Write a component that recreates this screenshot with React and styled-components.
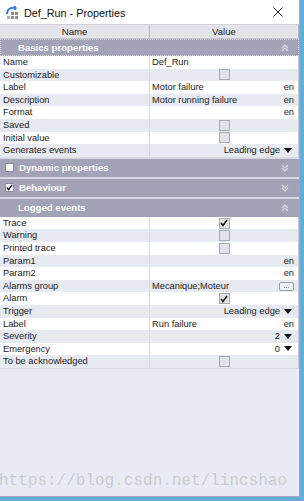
import React from "react";
import styled, { createGlobalStyle } from "styled-components";

const GlobalStyle = createGlobalStyle`
  html, body {
    margin: 0;
    padding: 0;
    background: #e8ebf3;
  }
  * {
    box-sizing: border-box;
  }
`;

const basics = [
  { name: "Name", type: "text", value: "Def_Run" },
  { name: "Customizable", type: "check" },
  { name: "Label", type: "text", value: "Motor failure", lang: "en" },
  { name: "Description", type: "text", value: "Motor running failure", lang: "en" },
  { name: "Format", type: "text", value: "", lang: "en" },
  { name: "Saved", type: "check" },
  { name: "Initial value", type: "check" },
  { name: "Generates events", type: "select", value: "Leading edge" },
];

const logged = [
  { name: "Trace", type: "check", checked: true },
  { name: "Warning", type: "check" },
  { name: "Printed trace", type: "check" },
  { name: "Param1", type: "text", value: "", lang: "en" },
  { name: "Param2", type: "text", value: "", lang: "en" },
  { name: "Alarms group", type: "button", value: "Mecanique;Moteur" },
  { name: "Alarm", type: "check", checked: true },
  { name: "Trigger", type: "select", value: "Leading edge" },
  { name: "Label", type: "text", value: "Run failure", lang: "en" },
  { name: "Severity", type: "select", value: "2" },
  { name: "Emergency", type: "select", value: "0" },
  { name: "To be acknowledged", type: "check" },
];

const sections = [
  { title: "Basics properties", open: true, focused: true, rows: basics },
  { title: "Dynamic properties", open: false, toggle: false },
  { title: "Behaviour", open: false, toggle: true },
  { title: "Logged events", open: true, rows: logged },
];

const Screen = styled.div`
  width: 304px;
  height: 501px;
  display: flex;
  background: #62aed8;
  padding-right: 4px;
  overflow: hidden;
`;

const Window = styled.div`
  position: relative;
  flex: 1;
  display: flex;
  flex-direction: column;
  background: #e8ebf3;
  border-right: 1px solid #a4a6b4;
  border-bottom: 1px solid #a4a6b4;
  margin-bottom: 4px;
  font-family: "Liberation Sans", Arial, sans-serif;
  color: #1b1b1b;
  overflow: hidden;
`;

const TitleBar = styled.div`
  height: 24px;
  flex-shrink: 0;
  display: flex;
  align-items: center;
  padding: 0 0 0 6px;
  gap: 5px;
  background: #ffffff;
  font-size: 10.8px;
  color: #111;
`;

const TitleText = styled.span`
  flex: 1;
  padding-top: 1px;
`;

const CloseButton = styled.div`
  width: 28px;
  height: 24px;
  display: flex;
  align-items: center;
  justify-content: center;
  margin-right: 7px;
`;

const Grid = styled.div`
  display: flex;
  flex-direction: column;
  background: #d9dbe4;
`;

const HeaderRow = styled.div`
  display: grid;
  grid-template-columns: 150px 1fr;
  height: 15px;
  background: #e4e5ea;
  border-top: 1px solid #cfd0d8;
  border-bottom: 1px solid #c4c5ce;
  font-size: 9.6px;
  color: #222;
`;

const HeaderCell = styled.div`
  display: flex;
  align-items: center;
  justify-content: center;
  border-right: 1px solid #b8b9c4;
`;

const Category = styled.div`
  height: ${(p) => (p.$first ? "17px" : "18px")};
  margin-top: ${(p) => (p.$first ? "0" : "2px")};
  display: flex;
  align-items: center;
  background: #a3a3b8;
  color: #ffffff;
  font-weight: bold;
  font-size: 9.6px;
  padding: 0 9px 0 4px;
  border: 1px ${(p) => (p.$focused ? "dotted #d4d4e0" : "solid #a3a3b8")};
`;

const CategoryTitle = styled.span`
  flex: 1;
  padding-left: ${(p) => (p.$indent ? "13px" : "5px")};
`;

const CatBox = styled.div`
  width: 9px;
  height: 9px;
  background: #ffffff;
  border: 1px solid #8a8aa0;
  display: flex;
  align-items: center;
  justify-content: center;
`;

const Row = styled.div`
  display: grid;
  grid-template-columns: 150px 1fr;
  height: 12.6px;
  background: ${(p) => (p.$alt ? "#e8eaf2" : "#ffffff")};
  font-size: 9.3px;
  line-height: 12.6px;
`;

const NameCell = styled.div`
  padding-left: 3px;
  border-right: 1px solid #d6d8e0;
  white-space: nowrap;
  overflow: hidden;
`;

const ValueCell = styled.div`
  display: flex;
  align-items: center;
  justify-content: ${(p) => (p.$center ? "center" : "space-between")};
  padding: 0 4px 0 2px;
  border-right: 1px solid #c8cad4;
  white-space: nowrap;
`;

const Lang = styled.span`
  margin-left: auto;
`;

const CheckBox = styled.div`
  width: 11px;
  height: 11px;
  background: #e2e3ea;
  border: 1px solid #a6a8b4;
  display: flex;
  align-items: center;
  justify-content: center;
  margin-left: 2px;
`;

const SelectValue = styled.span`
  margin-left: auto;
  display: flex;
  align-items: center;
  gap: 4px;
  padding-right: 2px;
`;

const DotsButton = styled.div`
  width: 15px;
  height: 9px;
  border: 1px solid #9a9cac;
  border-radius: 2px;
  background: #f0f1f5;
  font-size: 7px;
  line-height: 5px;
  text-align: center;
  color: #333;
`;

const Filler = styled.div`
  flex: 1;
  background: #e8ebf3;
  border-top: 1px solid #d6d8e2;
`;

const Watermark = styled.div`
  position: absolute;
  left: -1px;
  bottom: 6px;
  font-family: "Liberation Mono", "DejaVu Sans Mono", monospace;
  font-size: 16px;
  color: #c9cbd2;
  pointer-events: none;
  white-space: nowrap;
`;

const AppIcon = () => (
  <svg width="13" height="13" viewBox="0 0 13 13">
    <rect x="5" y="6" width="3" height="3" fill="#8d8d8d" />
    <rect x="9" y="6" width="3" height="3" fill="#8d8d8d" />
    <rect x="5" y="10" width="3" height="3" fill="#8d8d8d" />
    <rect x="9" y="10" width="3" height="3" fill="#8d8d8d" />
    <rect x="1" y="10" width="3" height="3" fill="#b0b0b0" />
    <path d="M1 8 C1 3 5 1 10 2 L8 0.5 M10 2 L8.5 4" fill="none" stroke="#2f7fd6" strokeWidth="2" />
  </svg>
);

const CloseIcon = () => (
  <svg width="10" height="10" viewBox="0 0 10 10">
    <path d="M0.5 0.5 L9.5 9.5 M9.5 0.5 L0.5 9.5" stroke="#222" strokeWidth="1" />
  </svg>
);

const Chevrons = ({ up }) => (
  <svg width="8" height="8" viewBox="0 0 8 8">
    <g fill="none" stroke="#dcdce6" strokeWidth="1.2" transform={up ? "" : "rotate(180 4 4)"}>
      <path d="M1 4 L4 1 L7 4" />
      <path d="M1 7 L4 4 L7 7" />
    </g>
  </svg>
);

const Tick = ({ size = 8 }) => (
  <svg width={size} height={size} viewBox="0 0 8 8">
    <path d="M1 4 L3 6.5 L7 1" fill="none" stroke="#111" strokeWidth="1.6" />
  </svg>
);

const Caret = () => (
  <svg width="8" height="5" viewBox="0 0 8 5">
    <path d="M0 0 L8 0 L4 5 Z" fill="#111" />
  </svg>
);

const Value = ({ row }) => {
  if (row.type === "check") {
    return (
      <ValueCell $center>
        <CheckBox>{row.checked && <Tick />}</CheckBox>
      </ValueCell>
    );
  }
  if (row.type === "select") {
    return (
      <ValueCell>
        <SelectValue>
          {row.value} <Caret />
        </SelectValue>
      </ValueCell>
    );
  }
  if (row.type === "button") {
    return (
      <ValueCell>
        <span>{row.value}</span>
        <DotsButton>...</DotsButton>
      </ValueCell>
    );
  }
  return (
    <ValueCell>
      <span>{row.value}</span>
      {row.lang && <Lang>{row.lang}</Lang>}
    </ValueCell>
  );
};

export default function App() {
  return (
    <>
      <GlobalStyle />
      <Screen>
        <Window>
          <TitleBar>
            <AppIcon />
            <TitleText>Def_Run - Properties</TitleText>
            <CloseButton>
              <CloseIcon />
            </CloseButton>
          </TitleBar>
          <Grid>
            <HeaderRow>
              <HeaderCell>Name</HeaderCell>
              <HeaderCell>Value</HeaderCell>
            </HeaderRow>
            {sections.map((section, i) => (
              <React.Fragment key={section.title}>
                <Category $first={i === 0} $focused={section.focused}>
                  {section.toggle !== undefined && (
                    <CatBox>{section.toggle && <Tick size={7} />}</CatBox>
                  )}
                  <CategoryTitle $indent={section.toggle === undefined}>
                    {section.title}
                  </CategoryTitle>
                  <Chevrons up={section.open} />
                </Category>
                {section.open &&
                  section.rows.map((row, j) => (
                    <Row key={row.name + j} $alt={j % 2 === 1}>
                      <NameCell>{row.name}</NameCell>
                      <Value row={row} />
                    </Row>
                  ))}
              </React.Fragment>
            ))}
          </Grid>
          <Filler />
          <Watermark>https://blog.csdn.net/lincshao</Watermark>
        </Window>
      </Screen>
    </>
  );
}
